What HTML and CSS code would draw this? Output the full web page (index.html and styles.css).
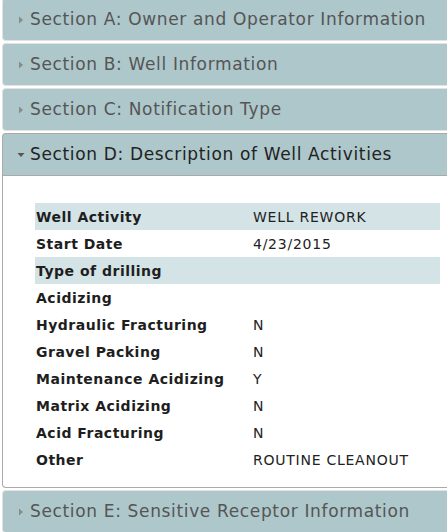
FILE: index.html
```html
<!DOCTYPE html>
<html lang="en">
<head>
<meta charset="utf-8">
<title>Well Notification</title>
<link rel="stylesheet" href="styles.css">
</head>
<body>
<div class="accordion">
  <div class="acc-header">
    <svg class="tri" width="8" height="8" viewBox="0 0 8 8"><polygon points="2,0.5 6,4 2,7.5"/></svg>
    <span>Section A: Owner and Operator Information</span>
  </div>
  <div class="acc-header">
    <svg class="tri" width="8" height="8" viewBox="0 0 8 8"><polygon points="2,0.5 6,4 2,7.5"/></svg>
    <span>Section B: Well Information</span>
  </div>
  <div class="acc-header">
    <svg class="tri" width="8" height="8" viewBox="0 0 8 8"><polygon points="2,0.5 6,4 2,7.5"/></svg>
    <span>Section C: Notification Type</span>
  </div>
  <div class="acc-header active">
    <svg class="tri" width="8" height="8" viewBox="0 0 8 8"><polygon points="0.5,2 7.5,2 4,6"/></svg>
    <span>Section D: Description of Well Activities</span>
  </div>
  <div class="acc-content">
    <table class="details">
      <tr class="shade"><th>Well Activity</th><td>WELL REWORK</td></tr>
      <tr><th>Start Date</th><td>4/23/2015</td></tr>
      <tr class="shade"><th>Type of drilling</th><td></td></tr>
      <tr><th>Acidizing</th><td></td></tr>
      <tr><th>Hydraulic Fracturing</th><td>N</td></tr>
      <tr><th>Gravel Packing</th><td>N</td></tr>
      <tr><th>Maintenance Acidizing</th><td>Y</td></tr>
      <tr><th>Matrix Acidizing</th><td>N</td></tr>
      <tr><th>Acid Fracturing</th><td>N</td></tr>
      <tr><th>Other</th><td>ROUTINE CLEANOUT</td></tr>
    </table>
  </div>
  <div class="acc-header">
    <svg class="tri" width="8" height="8" viewBox="0 0 8 8"><polygon points="2,0.5 6,4 2,7.5"/></svg>
    <span>Section E: Sensitive Receptor Information</span>
  </div>
</div>
</body>
</html>
```
FILE: styles.css
```css
html, body {
  margin: 0;
  padding: 0;
  background: #ffffff;
  overflow: hidden;
}

body {
  font-family: "DejaVu Sans", Verdana, sans-serif;
}

.accordion {
  width: 445px;
  margin: -4px 0 0 2px;
}

.acc-header {
  display: flex;
  align-items: center;
  margin-top: 2px;
  padding: 10px 0 10px 14px;
  line-height: 21px;
  font-size: 17px;
  letter-spacing: 0.65px;
  white-space: nowrap;
  color: #555555;
  background: #adc7cb;
  border: 1px solid #e2e2e2;
  border-right: 0;
  border-radius: 4px 0 0 4px;
}

.acc-header .tri {
  flex: none;
  width: 8px;
  height: 8px;
  margin-right: 5px;
  fill: #8a8a8a;
}

.acc-header.active {
  color: #222222;
  border-color: #aaaaaa;
  border-radius: 4px 0 0 0;
}

.acc-header.active .tri {
  fill: #555555;
}

.acc-content {
  padding: 27px 6px 14px 32px;
  border: 1px solid #aaaaaa;
  border-top: 0;
  border-right: 0;
  border-radius: 0 0 0 4px;
  background: #ffffff;
}

.details {
  width: 405px;
  border-collapse: collapse;
  font-size: 14px;
  color: #222222;
}

.details tr {
  height: 27px;
}

.details th {
  width: 217px;
  padding: 0 0 0 1px;
  text-align: left;
  font-weight: bold;
  letter-spacing: 0.5px;
  color: #1e1e1e;
}

.details td {
  padding: 0;
  letter-spacing: 0.75px;
}

.details tr.shade {
  background: #d4e3e6;
}
```
